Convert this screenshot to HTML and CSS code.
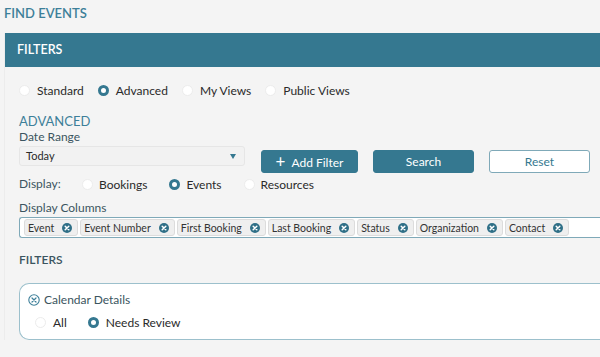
FILE: index.html
```html
<!DOCTYPE html>
<html lang="en">
<head>
  <meta charset="UTF-8">
  <title>Find Events</title>
  <link rel="stylesheet" href="styles.css">
</head>
<body>
  <h1 class="page-title">FIND EVENTS</h1>

  <div class="panel">
    <div class="panel-head">FILTERS</div>
    <div class="panel-body">
      <div class="radio-row views">
        <label class="radio"><span class="dot"></span>Standard</label>
        <label class="radio"><span class="dot on"></span>Advanced</label>
        <label class="radio"><span class="dot"></span>My Views</label>
        <label class="radio"><span class="dot"></span>Public Views</label>
      </div>

      <h2 class="section-title">ADVANCED</h2>
      <div class="field-label">Date Range</div>
      <div class="date-row">
        <div class="select">Today<span class="caret"></span></div>
        <div class="actions">
          <button class="btn primary"><span class="plus">+</span>Add Filter</button>
          <button class="btn primary">Search</button>
          <button class="btn outline">Reset</button>
        </div>
      </div>

      <div class="radio-row display">
        <span class="field-label inline">Display:</span>
        <label class="radio"><span class="dot"></span>Bookings</label>
        <label class="radio"><span class="dot on"></span>Events</label>
        <label class="radio"><span class="dot"></span>Resources</label>
      </div>

      <div class="field-label">Display Columns</div>
      <div class="tags">
        <span class="tag">Event<svg class="x" viewBox="0 0 10 10"><circle cx="5" cy="5" r="5"/><path d="M3.2 3.2 L6.8 6.8 M6.8 3.2 L3.2 6.8"/></svg></span>
        <span class="tag">Event Number<svg class="x" viewBox="0 0 10 10"><circle cx="5" cy="5" r="5"/><path d="M3.2 3.2 L6.8 6.8 M6.8 3.2 L3.2 6.8"/></svg></span>
        <span class="tag">First Booking<svg class="x" viewBox="0 0 10 10"><circle cx="5" cy="5" r="5"/><path d="M3.2 3.2 L6.8 6.8 M6.8 3.2 L3.2 6.8"/></svg></span>
        <span class="tag">Last Booking<svg class="x" viewBox="0 0 10 10"><circle cx="5" cy="5" r="5"/><path d="M3.2 3.2 L6.8 6.8 M6.8 3.2 L3.2 6.8"/></svg></span>
        <span class="tag">Status<svg class="x" viewBox="0 0 10 10"><circle cx="5" cy="5" r="5"/><path d="M3.2 3.2 L6.8 6.8 M6.8 3.2 L3.2 6.8"/></svg></span>
        <span class="tag">Organization<svg class="x" viewBox="0 0 10 10"><circle cx="5" cy="5" r="5"/><path d="M3.2 3.2 L6.8 6.8 M6.8 3.2 L3.2 6.8"/></svg></span>
        <span class="tag">Contact<svg class="x" viewBox="0 0 10 10"><circle cx="5" cy="5" r="5"/><path d="M3.2 3.2 L6.8 6.8 M6.8 3.2 L3.2 6.8"/></svg></span>
      </div>

      <div class="sub-title">FILTERS</div>
      <div class="filter-card">
        <div class="filter-name">
          <svg class="remove" viewBox="0 0 12 12" width="12" height="12">
            <circle cx="6" cy="6" r="5.2" fill="none" stroke="#3d7f99" stroke-width="1.1"/>
            <path d="M4 4 L8 8 M8 4 L4 8" stroke="#3d7f99" stroke-width="1.2" stroke-linecap="round"/>
          </svg>
          Calendar Details
        </div>
        <div class="radio-row review">
          <label class="radio"><span class="dot"></span>All</label>
          <label class="radio"><span class="dot on"></span>Needs Review</label>
        </div>
      </div>
    </div>
  </div>
</body>
</html>
```

FILE: styles.css
```css
* {
  box-sizing: border-box;
}

body {
  margin: 0;
  background: #f4f4f4;
  font-family: Lato, 'Open Sans', sans-serif;
  font-size: 12px;
  color: #2a2a2a;
  overflow: hidden;
}

.page-title {
  margin: 0;
  padding: 5px 4px 0;
  height: 33px;
  font-size: 13px;
  font-weight: 600;
  color: #3d7f99;
}

.panel {
  margin-left: 4px;
  border-left: 1px solid #ececec;
}

.panel-head {
  background: #357890;
  color: #fff;
  height: 34px;
  line-height: 34px;
  padding-left: 12px;
  font-weight: 600;
  font-size: 12.5px;
}

.panel-body {
  padding-left: 14px;
}

/* radios */
.radio-row {
  display: flex;
  align-items: center;
  white-space: nowrap;
}

.radio {
  display: flex;
  align-items: center;
}

.dot {
  flex-shrink: 0;
  width: 11px;
  height: 11px;
  border-radius: 50%;
  background: #fff;
  border: 1px solid #ececec;
  margin-right: 7px;
}

.dot.on {
  border: 3px solid #357890;
}

.views {
  height: 46px;
}

.views .radio {
  margin-right: 14px;
}

.section-title {
  margin: 0;
  font-size: 13px;
  font-weight: 400;
  color: #3d7f99;
  line-height: 16px;
}

.field-label {
  color: #3b5560;
  line-height: 16px;
}

.date-row {
  display: flex;
  align-items: flex-start;
  height: 30px;
}

.select {
  width: 226px;
  height: 20px;
  margin-top: 1px;
  border: 1px solid #e6e6e6;
  border-radius: 3px;
  background: #f2f2f2;
  padding-left: 6px;
  font-size: 11px;
  line-height: 18px;
  position: relative;
}

.caret {
  position: absolute;
  right: 8px;
  top: 7px;
  border-left: 3.5px solid transparent;
  border-right: 3.5px solid transparent;
  border-top: 5px solid #357890;
}

.actions {
  display: flex;
  gap: 15px;
  margin-left: 16px;
  margin-top: 5px;
}

.btn {
  height: 23px;
  border-radius: 3px;
  font-family: inherit;
  font-size: 12px;
  padding: 0;
  cursor: pointer;
}

.btn.primary {
  background: #357890;
  border: 1px solid #357890;
  color: #fff;
}

.btn:nth-child(1) {
  width: 97px;
}

.btn:nth-child(2) {
  width: 101px;
}

.btn.outline {
  width: 101px;
  background: #fff;
  border: 1px solid #7fa9b8;
  color: #357890;
}

.plus {
  font-size: 17px;
  font-weight: 400;
  margin-right: 6px;
  vertical-align: -1px;
}

.display {
  height: 18px;
  margin-bottom: 7px;
}

.display .field-label {
  width: 63px;
}

.display .dot {
  margin-right: 6px;
}

.display .radio {
  margin-right: 22px;
}

.tags {
  display: flex;
  align-items: center;
  gap: 2px;
  height: 21px;
  margin-top: 1px;
  padding: 0 4px;
  border: 1px solid #7fa9b8;
  border-right: none;
  border-radius: 3px 0 0 3px;
  background: #fff;
  white-space: nowrap;
  overflow: hidden;
}

.tag {
  flex-shrink: 0;
  display: flex;
  align-items: center;
  height: 17px;
  padding: 0 5px 0 3px;
  background: #efefef;
  border: 1px solid #dcdcdc;
  border-radius: 3px;
  font-size: 10.5px;
  color: #333;
}

.x {
  width: 10px;
  height: 10px;
  margin-left: 8px;
}

.x circle {
  fill: #2f6f87;
}

.x path {
  stroke: #fff;
  stroke-width: 1.5;
  stroke-linecap: round;
}

.sub-title {
  margin-top: 14px;
  font-size: 12px;
  font-weight: 600;
  color: #3b5560;
  height: 31px;
  line-height: 16px;
}

.filter-card {
  height: 57px;
  background: #fff;
  border: 1px solid #9cc0cc;
  border-right: none;
  border-radius: 10px 0 0 10px;
  padding: 7px 0 0 8px;
}

.filter-name {
  display: flex;
  align-items: center;
  gap: 4px;
  color: #3b5560;
  height: 17px;
}

.review {
  margin-top: 7px;
  padding-left: 7px;
}

.review .radio {
  margin-right: 21px;
}
```
